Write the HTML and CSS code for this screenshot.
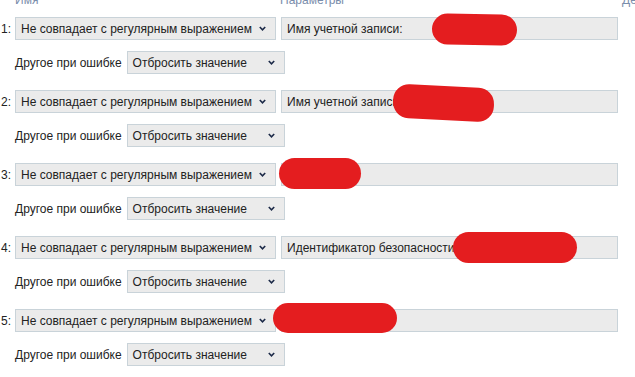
FILE: index.html
```html
<!DOCTYPE html>
<html lang="ru">
<head>
<meta charset="utf-8">
<link rel="stylesheet" href="styles.css">
</head>
<body>
<div class="header">
  <span>Имя</span>
  <span>Параметры</span>
  <span>Действие</span>
</div>

<div class="rule">
  <div class="main">
    <span class="num">1:</span>
    <div class="select wide"><span>Не совпадает с регулярным выражением</span><svg class="chev" viewBox="0 0 7 5"><polyline points="0.8,1 3.5,3.8 6.2,1"/></svg></div>
    <div class="input"><span>Имя учетной записи:</span><i class="blot b1"></i></div>
  </div>
  <div class="sub">
    <span class="lbl">Другое при ошибке</span>
    <div class="select narrow"><span>Отбросить значение</span><svg class="chev" viewBox="0 0 7 5"><polyline points="0.8,1 3.5,3.8 6.2,1"/></svg></div>
  </div>
</div>

<div class="rule">
  <div class="main">
    <span class="num">2:</span>
    <div class="select wide"><span>Не совпадает с регулярным выражением</span><svg class="chev" viewBox="0 0 7 5"><polyline points="0.8,1 3.5,3.8 6.2,1"/></svg></div>
    <div class="input"><span>Имя учетной записи:</span><i class="blot b2"></i></div>
  </div>
  <div class="sub">
    <span class="lbl">Другое при ошибке</span>
    <div class="select narrow"><span>Отбросить значение</span><svg class="chev" viewBox="0 0 7 5"><polyline points="0.8,1 3.5,3.8 6.2,1"/></svg></div>
  </div>
</div>

<div class="rule">
  <div class="main">
    <span class="num">3:</span>
    <div class="select wide"><span>Не совпадает с регулярным выражением</span><svg class="chev" viewBox="0 0 7 5"><polyline points="0.8,1 3.5,3.8 6.2,1"/></svg></div>
    <div class="input"><span></span><i class="blot b3"></i></div>
  </div>
  <div class="sub">
    <span class="lbl">Другое при ошибке</span>
    <div class="select narrow"><span>Отбросить значение</span><svg class="chev" viewBox="0 0 7 5"><polyline points="0.8,1 3.5,3.8 6.2,1"/></svg></div>
  </div>
</div>

<div class="rule">
  <div class="main">
    <span class="num">4:</span>
    <div class="select wide"><span>Не совпадает с регулярным выражением</span><svg class="chev" viewBox="0 0 7 5"><polyline points="0.8,1 3.5,3.8 6.2,1"/></svg></div>
    <div class="input"><span>Идентификатор безопасности:</span><i class="blot b4"></i></div>
  </div>
  <div class="sub">
    <span class="lbl">Другое при ошибке</span>
    <div class="select narrow"><span>Отбросить значение</span><svg class="chev" viewBox="0 0 7 5"><polyline points="0.8,1 3.5,3.8 6.2,1"/></svg></div>
  </div>
</div>

<div class="rule">
  <div class="main">
    <span class="num">5:</span>
    <div class="select wide"><span>Не совпадает с регулярным выражением</span><svg class="chev" viewBox="0 0 7 5"><polyline points="0.8,1 3.5,3.8 6.2,1"/></svg></div>
    <div class="input"><span></span><i class="blot b5"></i></div>
  </div>
  <div class="sub">
    <span class="lbl">Другое при ошибке</span>
    <div class="select narrow"><span>Отбросить значение</span><svg class="chev" viewBox="0 0 7 5"><polyline points="0.8,1 3.5,3.8 6.2,1"/></svg></div>
  </div>
</div>
</body>
</html>
```

FILE: styles.css
```css
html, body {
  margin: 0;
  padding: 0;
  background: #ffffff;
  overflow: hidden;
}
body {
  font-family: "Liberation Sans", Arial, sans-serif;
  font-size: 12px;
  color: #222;
  width: 635px;
  height: 377px;
}
.header {
  display: grid;
  grid-template-columns: 265px 342px 100px;
  padding-left: 15px;
  margin-top: -7px;
  height: 24px;
  line-height: 14px;
  font-size: 12px;
  color: #7a8dab;
  white-space: nowrap;
}
.rule {
  display: flex;
  flex-direction: column;
  gap: 11px;
  margin-bottom: 16px;
}
.main {
  display: flex;
  align-items: center;
  height: 23px;
}
.num {
  width: 15px;
  padding-left: 1px;
  box-sizing: border-box;
}
.select, .input {
  box-sizing: border-box;
  height: 23px;
  background: #ebebeb;
  border: 1px solid #c9d3d9;
  display: flex;
  align-items: center;
  padding: 0 5px;
  white-space: nowrap;
}
.select {
  justify-content: space-between;
}
.wide {
  width: 261px;
}
.narrow {
  width: 158px;
}
.input {
  position: relative;
  width: 337px;
  margin-left: 5px;
}
.chev {
  width: 7px;
  height: 5px;
  margin-right: 4px;
  fill: none;
  stroke: #1c2a48;
  stroke-width: 1.6;
}
.sub {
  display: flex;
  align-items: center;
  gap: 5px;
  padding-left: 15px;
  height: 23px;
}
.blot {
  position: absolute;
  background: #e41d1f;
  border-radius: 16px;
}
.b1 { left: 150px; top: -4px; width: 85px; height: 31px; transform: rotate(1deg); }
.b2 { left: 111px; top: -5px; width: 101px; height: 34px; transform: rotate(3deg); }
.b3 { left: -3px; top: -6px; width: 82px; height: 31px; }
.b4 { left: 171px; top: -5px; width: 124px; height: 31px; }
.b5 { left: -9px; top: -7px; width: 124px; height: 30px; }
```
